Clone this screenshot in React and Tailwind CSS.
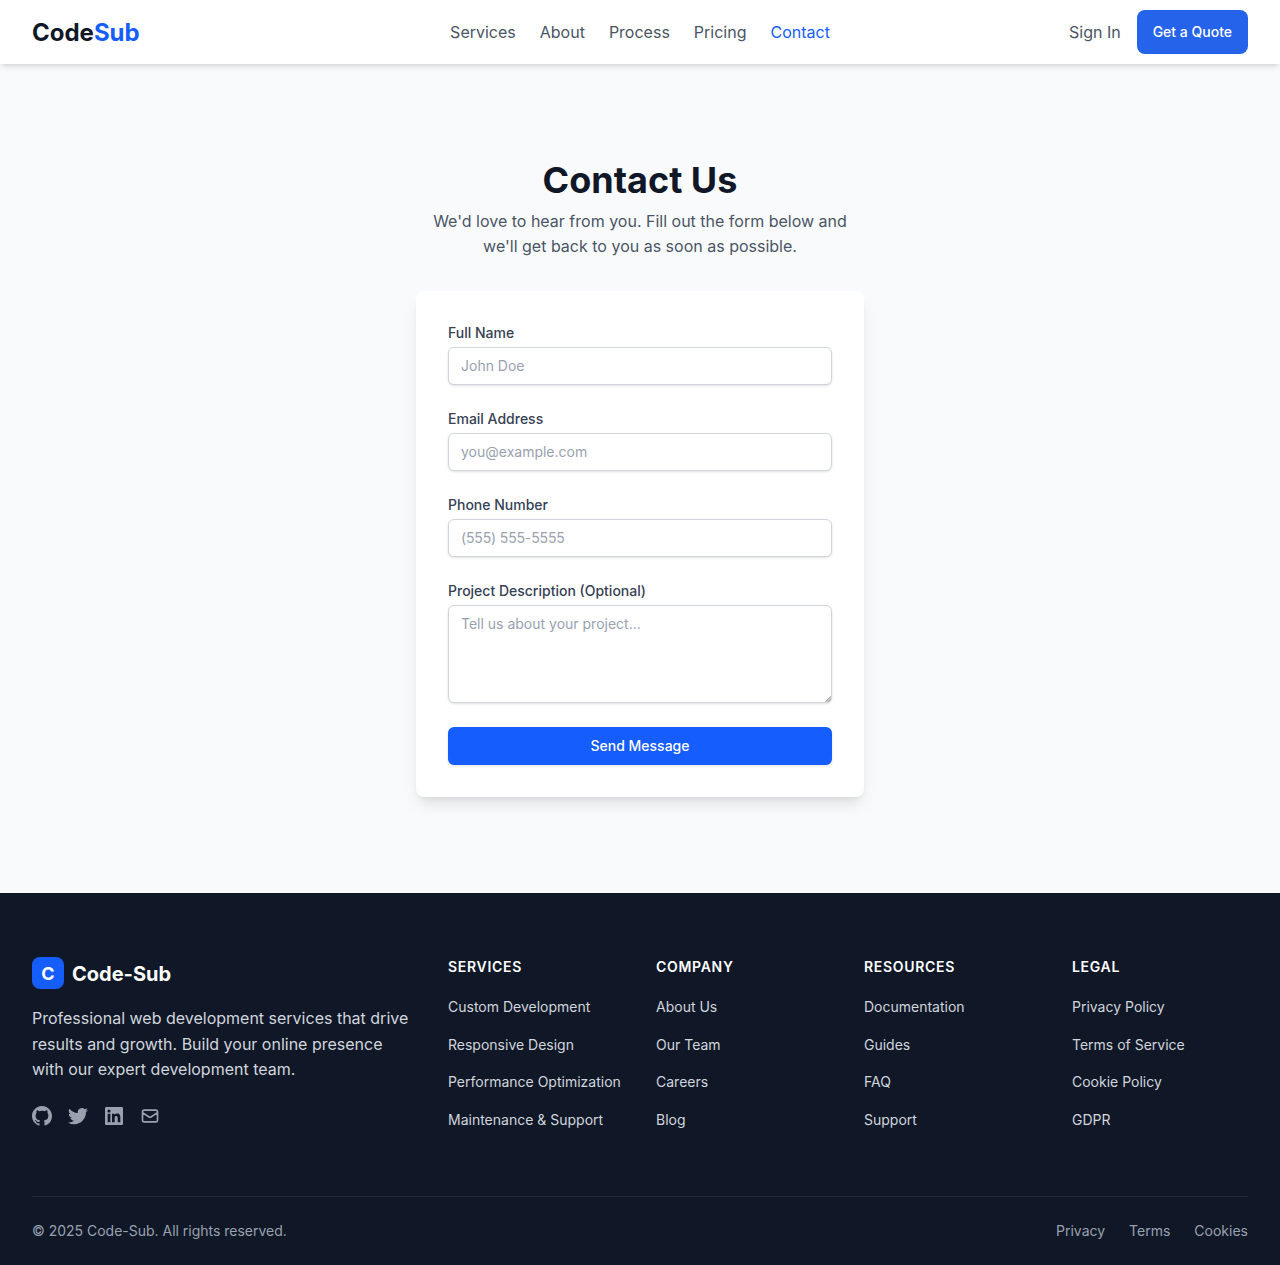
const columns = [
  { title: "Services", links: ["Custom Development", "Responsive Design", "Performance Optimization", "Maintenance & Support"] },
  { title: "Company", links: ["About Us", "Our Team", "Careers", "Blog"] },
  { title: "Resources", links: ["Documentation", "Guides", "FAQ", "Support"] },
  { title: "Legal", links: ["Privacy Policy", "Terms of Service", "Cookie Policy", "GDPR"] },
];

const fields = [
  { id: "name", label: "Full Name", placeholder: "John Doe", type: "text" },
  { id: "email", label: "Email Address", placeholder: "you@example.com", type: "email" },
  { id: "phone", label: "Phone Number", placeholder: "(555) 555-5555", type: "tel" },
];

const inputClass =
  "block w-full rounded-md border border-gray-300 bg-white px-3 py-2 text-sm leading-5 placeholder-gray-400 shadow-sm";

function Header() {
  return (
    <header className="relative h-16 bg-white shadow-md">
      <div className="grid h-full grid-cols-[1fr_auto_1fr] items-center px-8">
        <a href="#" className="pt-0.5 text-2xl font-bold text-gray-900">
          Code<span className="text-blue-600">Sub</span>
        </a>
        <nav className="flex gap-6 text-gray-600">
          <a href="#">Services</a>
          <a href="#">About</a>
          <a href="#">Process</a>
          <a href="#">Pricing</a>
          <a href="#" className="text-[#155dfc]">Contact</a>
        </nav>
        <div className="flex items-center justify-end gap-4">
          <a href="#" className="text-gray-600">Sign In</a>
          <a href="#" className="flex h-11 items-center rounded-lg bg-[#2563eb] px-4 text-sm font-medium text-white">
            Get a Quote
          </a>
        </div>
      </div>
    </header>
  );
}

function ContactForm() {
  return (
    <form className="mt-[31px] space-y-6 rounded-lg bg-white p-8 shadow-lg">
      {fields.map((f) => (
        <div key={f.id}>
          <label htmlFor={f.id} className="mb-1 block text-sm font-medium text-gray-700">{f.label}</label>
          <input
            id={f.id}
            type={f.type}
            placeholder={f.placeholder}
            className={f.type === "tel" ? inputClass + " tracking-[-0.15px]" : inputClass}
          />
        </div>
      ))}
      <div>
        <label htmlFor="description" className="mb-1 block text-sm font-medium text-gray-700">
          Project Description (Optional)
        </label>
        <div className="relative">
          <textarea id="description" rows={4} placeholder="Tell us about your project..." className={inputClass + " resize-none"} />
          <svg className="absolute right-px bottom-px size-1.5" viewBox="0 0 6 6">
            <path d="M0 6L6 0V4L4 6Z" fill="#c4c4c4" />
            <path d="M0.5 5.5L5.5 0.5M3 5.8L5.8 3" stroke="#a3a3a3" strokeWidth="0.8" />
          </svg>
        </div>
      </div>
      <button type="button" className="flex w-full justify-center rounded-md border border-transparent bg-blue-600 px-4 py-2 text-sm font-medium text-white shadow-sm">
        Send Message
      </button>
    </form>
  );
}

function SocialLinks() {
  return (
    <div className="mt-[23px] flex gap-4 text-gray-400">
      <svg className="size-5" fill="currentColor" viewBox="0 0 20 20">
        <path fillRule="evenodd" clipRule="evenodd" d="M10 0C4.477 0 0 4.484 0 10.017c0 4.425 2.865 8.18 6.839 9.504.5.092.682-.217.682-.483 0-.237-.008-.868-.013-1.703-2.782.605-3.369-1.343-3.369-1.343-.454-1.158-1.11-1.466-1.11-1.466-.908-.62.069-.608.069-.608 1.003.07 1.531 1.032 1.531 1.032.892 1.53 2.341 1.088 2.91.832.092-.647.35-1.088.636-1.338-2.22-.253-4.555-1.113-4.555-4.951 0-1.093.39-1.988 1.029-2.688-.103-.253-.446-1.272.098-2.65 0 0 .84-.27 2.75 1.026A9.564 9.564 0 0110 4.844c.85.004 1.705.115 2.504.337 1.909-1.296 2.747-1.027 2.747-1.027.546 1.379.203 2.398.1 2.651.64.7 1.028 1.595 1.028 2.688 0 3.848-2.339 4.695-4.566 4.942.359.31.678.921.678 1.856 0 1.338-.012 2.419-.012 2.747 0 .268.18.58.688.482A10.019 10.019 0 0020 10.017C20 4.484 15.522 0 10 0z" />
      </svg>
      <svg className="size-5" fill="currentColor" viewBox="0 0 20 20">
        <path d="M6.29 18.251c7.547 0 11.675-6.253 11.675-11.675 0-.178 0-.355-.012-.53A8.348 8.348 0 0020 3.92a8.19 8.19 0 01-2.357.646 4.118 4.118 0 001.804-2.27 8.224 8.224 0 01-2.605.996 4.107 4.107 0 00-6.993 3.743 11.65 11.65 0 01-8.457-4.287 4.106 4.106 0 001.27 5.477A4.073 4.073 0 01.8 7.713v.052a4.105 4.105 0 003.292 4.022 4.095 4.095 0 01-1.853.07 4.108 4.108 0 003.834 2.85A8.233 8.233 0 010 16.407a11.616 11.616 0 006.29 1.84" />
      </svg>
      <svg className="size-5" fill="currentColor" viewBox="0 0 20 20">
        <path fillRule="evenodd" clipRule="evenodd" d="M16.338 16.338H13.67V12.16c0-.995-.017-2.277-1.387-2.277-1.39 0-1.601 1.086-1.601 2.207v4.248H8.014v-8.59h2.559v1.174h.037c.356-.675 1.227-1.387 2.526-1.387 2.703 0 3.203 1.778 3.203 4.092v4.711zM5.005 6.575a1.548 1.548 0 11-.003-3.096 1.548 1.548 0 01.003 3.096zm-1.337 9.763H6.34v-8.59H3.667v8.59zM17.668 1H2.328C1.595 1 1 1.581 1 2.298v15.403C1 18.418 1.595 19 2.328 19h15.34c.734 0 1.332-.582 1.332-1.299V2.298C19 1.581 18.402 1 17.668 1z" />
      </svg>
      <svg className="size-5" fill="none" stroke="currentColor" strokeWidth="2" strokeLinecap="round" strokeLinejoin="round" viewBox="0 0 24 24">
        <path d="M3 8l7.89 5.26a2 2 0 002.22 0L21 8M5 19h14a2 2 0 002-2V7a2 2 0 00-2-2H5a2 2 0 00-2 2v10a2 2 0 002 2z" />
      </svg>
    </div>
  );
}

function Footer() {
  return (
    <footer className="h-[372px] bg-[#101828] px-8 pt-16 text-gray-300">
      <div className="grid grid-cols-6 gap-8">
        <div className="col-span-2">
          <div className="flex items-center gap-2">
            <div className="flex size-8 items-center justify-center rounded-lg bg-[#155dfc] pt-0.5 text-lg font-bold text-white">C</div>
            <span className="pt-0.5 text-xl font-bold text-white">Code-Sub</span>
          </div>
          <p className="mt-[17px] leading-[25.6px]">
            Professional web development services that drive results and growth. Build your online presence with our expert development team.
          </p>
          <SocialLinks />
        </div>
        {columns.map((c) => (
          <div key={c.title}>
            <h3 className="text-sm font-semibold tracking-wider text-white uppercase">{c.title}</h3>
            <ul className="mt-[17px] space-y-3">
              {c.links.map((l) => (
                <li key={l} className="h-[25.6px] text-sm leading-[25.6px] whitespace-nowrap">{l}</li>
              ))}
            </ul>
          </div>
        ))}
      </div>
      <div className="mt-16 flex items-center justify-between border-t border-[#1e2939] pt-6 text-sm text-gray-400">
        <p className="tracking-[-0.01px]">© 2025 Code-Sub. All rights reserved.</p>
        <div className="flex gap-6">
          <a href="#">Privacy</a>
          <a href="#">Terms</a>
          <a href="#">Cookies</a>
        </div>
      </div>
    </footer>
  );
}

export default function App() {
  return (
    <div className="bg-gray-50 font-[Inter,sans-serif]">
      <Header />
      <main className="h-[829px] pt-24">
        <div className="mx-auto w-md">
          <h1 className="text-center text-4xl leading-10 font-bold text-gray-900">Contact Us</h1>
          <p className="mt-[9px] text-center leading-[25.4px] text-gray-600">
            We'd love to hear from you. Fill out the form below and we'll get back to you as soon as possible.
          </p>
          <ContactForm />
        </div>
      </main>
      <Footer />
    </div>
  );
}
